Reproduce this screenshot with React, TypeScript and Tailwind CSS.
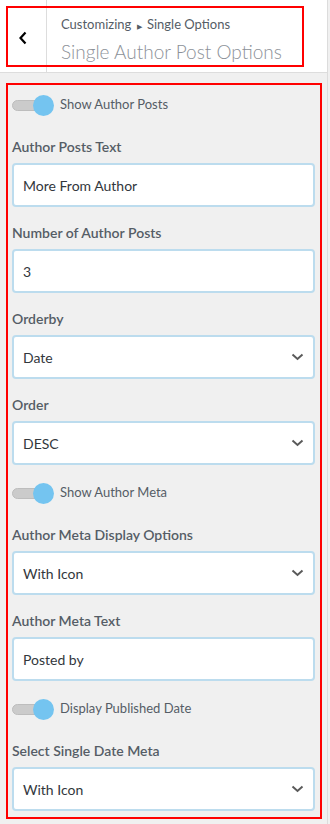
type Field =
  | { kind: "toggle"; label: string }
  | { kind: "input"; label: string; value: string }
  | { kind: "select"; label: string; value: string };

const fields: Field[] = [
  { kind: "toggle", label: "Show Author Posts" },
  { kind: "input", label: "Author Posts Text", value: "More From Author" },
  { kind: "input", label: "Number of Author Posts", value: "3" },
  { kind: "select", label: "Orderby", value: "Date" },
  { kind: "select", label: "Order", value: "DESC" },
  { kind: "toggle", label: "Show Author Meta" },
  { kind: "select", label: "Author Meta Display Options", value: "With Icon" },
  { kind: "input", label: "Author Meta Text", value: "Posted by" },
  { kind: "toggle", label: "Display Published Date" },
  { kind: "select", label: "Select Single Date Meta", value: "With Icon" },
];

function Toggle({ label }: { label: string }) {
  return (
    <div className="flex items-center h-[24px] mb-[20px]">
      <div className="relative w-[42px] h-[20px] shrink-0">
        <div className="absolute left-0 top-[5px] w-[36px] h-[11px] rounded-full bg-[#cbcbcb] border border-[#bdbdbd]" />
        <div className="absolute left-[21px] top-0 w-[21px] h-[21px] rounded-full bg-[#74c4f0]" />
      </div>
      <span className="ml-[6px] text-[13px] text-[#555d66]">{label}</span>
    </div>
  );
}

function Box({ value, select }: { value: string; select?: boolean }) {
  return (
    <div className="flex items-center justify-between h-[44px] w-full bg-white border-2 border-[#bcdcee] rounded-[4px] pl-[9px] pr-[9px] text-[14px] text-[#32373c]">
      <span>{value}</span>
      {select && (
        <svg width="13" height="8" viewBox="0 0 13 8" fill="none">
          <path d="M1.5 1.5 L6.5 6 L11.5 1.5" stroke="#5a5a5a" strokeWidth="2" />
        </svg>
      )}
    </div>
  );
}

export default function App() {
  return (
    <div className="w-[330px] h-[824px] bg-[#f0f0f0] font-[Lato,'Noto_Sans',sans-serif] overflow-hidden">
      <div className="w-[328px] h-full border-r border-[#dcdcdc]">
        {/* Header */}
        <div className="relative flex h-[73px] bg-white border-b border-[#dddddd]">
          <div className="w-[47px] h-full flex items-center justify-center border-r border-[#dddddd] pt-[4px]">
            <svg width="10" height="14" viewBox="0 0 10 14" fill="none">
              <path d="M7.5 1.5 L2.5 7 L7.5 12.5" stroke="#000" strokeWidth="2.2" />
            </svg>
          </div>
          <div className="pl-[14px] pt-[15px]">
            <div className="text-[13px] leading-[18px] text-[#555d66]">
              Customizing <span className="text-[7px] align-middle mx-[2px]">▶</span> Single Options
            </div>
            <div className="text-[19px] leading-[28px] font-light text-[#8c9198] mt-[3px]">
              Single Author Post Options
            </div>
          </div>
          <div className="absolute left-[6px] top-[6px] w-[298px] h-[61px] border-2 border-[#ff0000] pointer-events-none" />
        </div>

        {/* Options */}
        <div className="mt-[10px] ml-[6px] w-[316px] border-2 border-[#ff0000] pt-[8px] pl-[4px] pr-[5px] pb-[6px]">
          {fields.map((f, i) =>
            f.kind === "toggle" ? (
              <Toggle key={i} label={f.label} />
            ) : (
              <div key={i} className={i === fields.length - 1 ? "" : "mb-[16px]"}>
                <div className="text-[14px] leading-[20px] font-semibold text-[#555d66] mb-[6px]">{f.label}</div>
                <Box value={f.value} select={f.kind === "select"} />
              </div>
            )
          )}
        </div>
      </div>
    </div>
  );
}
